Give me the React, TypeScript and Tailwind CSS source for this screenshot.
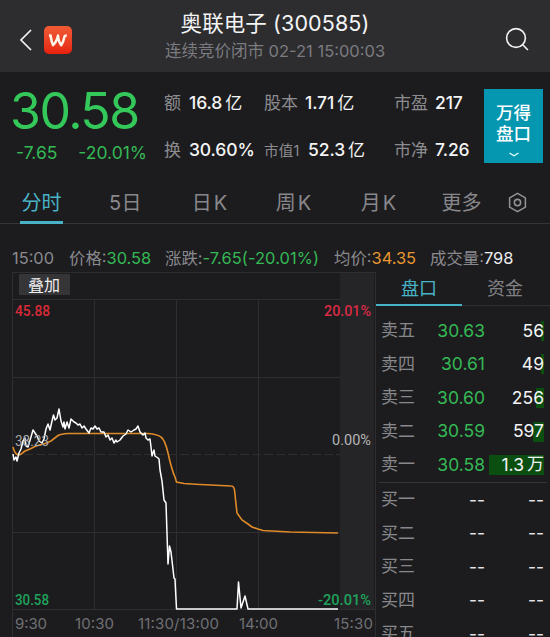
import clsx from "clsx";

const stats = [
  { label: "额", value: "16.8", unit: "亿" },
  { label: "股本", value: "1.71", unit: "亿" },
  { label: "市盈", value: "217" },
  { label: "换", value: "30.60%" },
  { label: "市值1", value: "52.3", unit: "亿", small: true },
  { label: "市净", value: "7.26" },
];

const periods = [
  { label: "分时", className: "ml-[20px] w-[43px]" },
  { label: "5日", className: "ml-[41px] w-[43px] tracking-[0.5px]" },
  { label: "日K", className: "ml-[42px] w-[43px] tracking-[2px]" },
  { label: "周K", className: "ml-[41px] w-[43px] tracking-[2px]" },
  { label: "月K", className: "ml-[42px] w-[43px] tracking-[2px]" },
  { label: "更多", className: "ml-[39px] w-[43px]" },
];

const asks = [
  { label: "卖五", price: "30.63", volume: "56", bar: 3 },
  { label: "卖四", price: "30.61", volume: "49", bar: 3 },
  { label: "卖三", price: "30.60", volume: "256", bar: 8 },
  { label: "卖二", price: "30.59", volume: "597", bar: 11 },
  { label: "卖一", price: "30.58", volume: "1.3", unit: "万", bar: 55 },
];

const bids = ["买一", "买二", "买三", "买四", "买五"];

const priceLine =
  "13,454 14,460 16,457 17,461 19,453 21,449 23,441 25,438 26,446 28,447 31,437 33,430 35,433 37,436 39,441 42,443 44,439 46,429 48,424 50,430 52,421 53.5,415 55,420 57,418 59,409 61,421 63,427 64,422 65,429 67,422 69,428 71,419 74,422 76,423 78,425 80,424 82,428 84,426 86,429 89,433 91,428 93,429 95,426 97,429 99,428 101,432 104,432 106,437 108,435 110,440 112,438 114,443 116,440 117,442 120,440 123,436 126,434 128,430 131,432 134,430 136,429 138,426 140,432 143,435 145,433 146,438 148,440 150,439 151,447 152,456 154,450 155,456 158,458 159,459 160,470 162,481 164,500 166,503 168,564 169.5,546 171,552 174,578 175,579 176.5,609 237,609 238.5,582 241,608 245,596 248,609 338,609";

const averageLine =
  "M13 447 C14 451 15 454 18 455 C22 455 22 453 25 451 L30 449 L36 446 L45 443.500 L51 441 L58 435.500 Q61 434 68 433.500 L148 433.500 Q158 434.500 161 437 Q165 440 168 453 Q172 471 175 477 L176.500 482 L184 483.500 L200 484.500 L231 486 Q234 486 234.500 490 L237 513 L242 520 L248 524 L252 527 L258 529 L263 530.500 L290 532 L338 533";

const Header = () => (
  <header className="flex h-[72px] shrink-0 items-center bg-[#2d2d2f] pb-[1px]">
    <svg className="ml-[18px] mt-[9px] h-6 w-4" viewBox="0 0 16 24" fill="none">
      <path d="M13 2 3 12l10 10" stroke="#f2f2f2" strokeWidth="1.700" />
    </svg>
    <div className="ml-[10px] mt-[9px] flex h-7 w-7 items-center justify-center rounded-[5px] bg-gradient-to-b from-[#f05a35] to-[#e71f0e]">
      <svg className="h-[15px] w-5" viewBox="0 0 20 15" fill="none">
        <path
          d="M1 2.500h1.600c.6 3.800 1 6.800 2.400 9.700C7.700 9.700 9.200 6.500 10 2.500c.4 4.300 1.200 7.200 3.200 9.700 2.200-3.100 2.800-6.300 3.200-8.500.2-1 .8-1.300 2.400-1.300"
          stroke="#fff4e8"
          strokeWidth="2.500"
          strokeLinejoin="round"
        />
      </svg>
    </div>
    <div className="ml-[73px] flex w-[260px] flex-col items-center whitespace-nowrap">
      <h1 className="text-[21.500px] leading-[29px] tracking-[0.1px] text-[#f4f4f5]">奥联电子 (300585)</h1>
      <p className="mt-[1px] text-[16.500px] leading-6 text-[#7b7b80]">连续竞价闭市 02-21 15:00:03</p>
    </div>
    <svg className="ml-[100px] mt-[7px] h-6 w-6" viewBox="0 0 24 24" fill="none" stroke="#f2f2f2" strokeWidth="1.600">
      <circle cx="11" cy="11" r="9.400" />
      <path d="m17.700 17.700 5.200 5.300" />
    </svg>
  </header>
);

const Quote = () => (
  <section className="flex h-[106px] shrink-0">
    <div className="w-[164px] shrink-0">
      <div className="ml-[10px] mt-[9px] h-[60px] text-[50px] leading-[60px] tracking-[-1.500px] text-[#34c759]">
        30.58
      </div>
      <div className="flex justify-between pl-4 pr-[17px] text-[17.500px] leading-6 text-[#34b955]">
        <span>-7.65</span>
        <span>-20.01%</span>
      </div>
    </div>
    <div className="mt-2 grid h-[94px] w-[320px] shrink-0 grid-cols-[100px_130px_90px] grid-rows-[47px_47px] items-center whitespace-nowrap">
      {stats.map(({ label, value, unit, small }) => (
        <div key={label} className="flex items-center">
          <span
            className={clsx(
              "text-[#8c8c90]",
              small ? "w-[44px] text-[14.500px] tracking-[0.3px]" : "text-[17px]",
              label.length === 2 && "w-[41px]",
              label.length === 1 && "w-[25px]"
            )}
          >
            {label}
          </span>
          <span className="text-[17.500px] font-[450] tracking-[-0.1px] text-[#f4f4f5]">{value}</span>
          {unit && <span className="ml-[3px] text-[17px] text-[#f4f4f5]">{unit}</span>}
        </div>
      ))}
    </div>
    <button className="mt-[17px] flex h-[74px] w-[59px] flex-col items-center bg-[#0596b0] pt-[13px] text-[17.500px] font-medium leading-[21px] text-white">
      <span>万得</span>
      <span>盘口</span>
      <svg className="mt-[8px] h-[5px] w-[10px]" viewBox="0 0 10 5" fill="none">
        <path d="M.5 1 5 3.800 9.500 1" stroke="#e8ffff" strokeWidth="1.300" />
      </svg>
    </button>
  </section>
);

const Periods = () => (
  <nav className="flex h-[46px] shrink-0 border-b border-[#353537]">
    {periods.map(({ label, className }, index) => (
      <button
        key={label}
        className={clsx(
          "h-[46px] whitespace-nowrap border-b-[3px] pt-[7px] text-[20px]",
          index === 0 ? "border-[#48b3c6] text-[#48b3c6]" : "border-transparent text-[#88888c]",
          className
        )}
      >
        {label}
      </button>
    ))}
    <svg className="ml-[25px] mt-[14px] h-[21px] w-[19px]" viewBox="0 0 20 22" fill="none" stroke="#939397" strokeWidth="1.600">
      <path d="M10 1.300 18.300 6.100v9.800L10 20.700 1.700 15.900V6.100Z" strokeLinejoin="round" />
      <circle cx="10" cy="11" r="3.300" />
    </svg>
  </nav>
);

const Summary = () => (
  <div className="flex h-[48px] shrink-0 items-end whitespace-nowrap pb-[2px] pl-3 text-[16.400px] leading-6 text-[#8a8a8e]">
    <span className="w-[57px]">15:00</span>
    <span className="w-[96px]">
      价格:<span className="text-[#34b955]">30.58</span>
    </span>
    <span className="w-[169px]">
      涨跌:<span className="tracking-[0.1px] text-[#34b955]">-7.65(-20.01%)</span>
    </span>
    <span className="w-[96px]">
      均价:<span className="text-[#e79630]">34.35</span>
    </span>
    <span>
      成交量:<span className="text-[#ededee]">798</span>
    </span>
  </div>
);

const Chart = () => (
  <svg className="h-[365px] w-[376px] shrink-0" viewBox="0 272 376 365" fill="none">
    <rect x="340" y="272" width="34" height="338" fill="#252527" />
    <g stroke="#2e2e31">
      <path d="M12.500 272V637M375.500 272V637M12 272.500H375M12 299.500H340M12 377.500H340M12 532.500H340M12 609.500H375" />
      <path d="M94.500 300V609M176.500 300V609M258.500 300V609" />
      <path d="M12 454.500H340" strokeDasharray="9 3" />
    </g>
    <rect x="19" y="274" width="51" height="21" fill="#353538" />
    <text x="28" y="290.500" fontSize="16" textLength="32" fill="#f0f0f0">叠加</text>
    <path d={averageLine} stroke="#df8a28" strokeWidth="1.600" />
    <polyline points={priceLine} stroke="#ffffff" strokeWidth="1.500" strokeLinejoin="round" />
    <g fontFamily="Roboto" fontSize="14.500" fontWeight="500">
      <text x="15" y="316" textLength="35" lengthAdjust="spacingAndGlyphs" fill="#d92b37">45.88</text>
      <text x="324" y="316" textLength="47" lengthAdjust="spacingAndGlyphs" fill="#d92b45">20.01%</text>
      <text x="15" y="446" textLength="34" lengthAdjust="spacingAndGlyphs" fill="#a8a8ab" fontWeight="400">38.23</text>
      <text x="332" y="445" textLength="39" lengthAdjust="spacingAndGlyphs" fill="#b5b5b7" fontWeight="400">0.00%</text>
      <text x="15" y="605" textLength="34" lengthAdjust="spacingAndGlyphs" fill="#1fa25b">30.58</text>
      <text x="318" y="605" textLength="53" lengthAdjust="spacingAndGlyphs" fill="#1fa25b">-20.01%</text>
    </g>
    <g fontSize="15" fill="#707074">
      <text x="15" y="629" textLength="32">9:30</text>
      <text x="75" y="629" textLength="39">10:30</text>
      <text x="138" y="629" textLength="81">11:30/13:00</text>
      <text x="239" y="629" textLength="39">14:00</text>
      <text x="334" y="629" textLength="39">15:30</text>
    </g>
  </svg>
);

const OrderBook = () => (
  <aside className="w-[174px] shrink-0">
    <div className="flex h-[34px] border-b border-[#2f2f32] text-[18px]">
      <button className="h-[34px] w-[86px] border-b-2 border-[#48b3c6] text-[#48b3c6]">盘口</button>
      <button className="w-[86px] text-[#818185]">资金</button>
    </div>
    <div className="pt-[8px]">
      {asks.map(({ label, price, volume, unit, bar }) => (
        <div key={label} className="flex h-[33.600px] items-center pl-[5px] pr-[6px] text-[17.500px]">
          <span className="w-[42px] text-[17px] text-[#88888c]">{label}</span>
          <span className="w-[62px] text-right text-[#34b955]">{price}</span>
          <div className="relative flex h-5 flex-1 items-center justify-end text-[#f4f4f5]">
            <div className="absolute right-0 top-0 h-5 bg-[#0b4f10]" style={{ width: bar }} />
            <span className="relative">{volume}</span>
            {unit && <span className="relative ml-[3px] text-[17px]">{unit}</span>}
          </div>
        </div>
      ))}
    </div>
    <div className="mx-[3px] border-b border-[#353538]" />
    {bids.map((label) => (
      <div key={label} className="flex h-[33.600px] items-center pl-[5px] pr-[6px] text-[17.500px] text-[#e4e4e6]">
        <span className="w-[42px] text-[17px] text-[#88888c]">{label}</span>
        <span className="w-[62px] text-right">--</span>
        <span className="flex-1 text-right">--</span>
      </div>
    ))}
  </aside>
);

const App = () => (
  <div className="flex h-[637px] w-[550px] flex-col overflow-hidden bg-[#1c1c1e] font-['Inter','Noto_Sans_CJK_SC',sans-serif]">
    <Header />
    <Quote />
    <Periods />
    <Summary />
    <main className="flex">
      <Chart />
      <OrderBook />
    </main>
  </div>
);

export default App;
